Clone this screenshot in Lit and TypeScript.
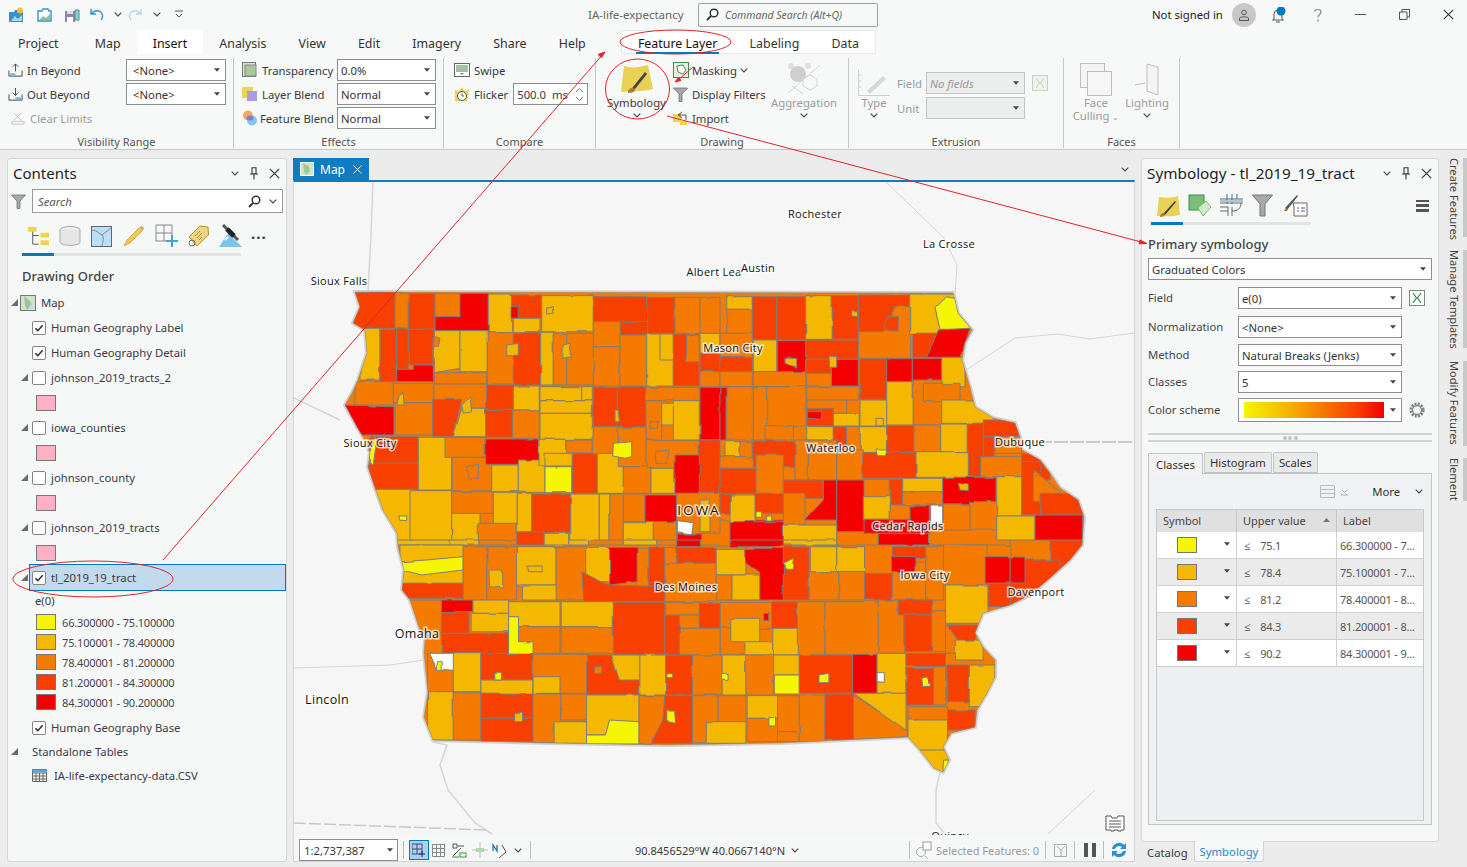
import { LitElement, html, css, svg } from "lit";
import { customElement } from "lit/decorators.js";

const COL: Record<string, string> = { y: "#f6f600", a: "#f5b800", o: "#f57b00", d: "#f74000", r: "#f50000", w: "#ffffff" };

const GROUPS = [
  { ox: 0, oy: 0, sx: 1, sy: 1, d: `o 1010 535 1050 560;d 1050 535 1084 585;d 1010 560 1060 612;r 1010 557 1025 583;o 930 720 960 735` },
  { ox: 390, oy: 520, sx: 2.529, sy: 3, d: `
a 15 0 150 75;a 150 0 225 75;o 225 10 320 75;d 320 35 390 75;a 390 40 455 75;a 455 0 500 75;o 500 0 590 75;a 590 10 675 75;o 675 10 725 75;r 725 40 785 80;o 785 0 860 75;r 860 0 995 80;a 995 20 1130 75;o 1130 0 1235 75;r 1235 0 1365 75;o 1365 10 1568 75;
a 25 75 185 190;y 30 125 90 120 185 110 185 150 80 165 30 150;d 30 190 200 235;o 185 80 245 240;o 245 80 320 240;a 320 80 420 195;a 335 195 432 240;o 420 80 495 240;a 495 82 555 185;o 620 85 655 240;d 655 82 695 200;d 485 155 540 190 560 195 700 200 700 245 490 245;r 555 82 625 82 625 185 555 195;o 695 82 825 130;d 725 82 825 130;o 695 130 825 245;a 825 85 900 165;r 900 85 995 85 995 240 935 240 935 160 900 130;o 825 165 865 240;a 865 165 935 240;d 995 80 1060 240;o 1060 155 1135 240;a 1063 80 1130 155;a 1130 80 1200 155;o 1135 155 1200 240;d 1200 160 1270 240;o 1270 125 1355 240;d 1270 80 1400 115;r 1268 110 1330 155;o 1355 80 1400 240;o 1400 75 1510 195;r 1505 110 1568 190;a 1405 195 1510 310;d 1510 190 1568 260;
o 50 240 130 340;r 130 240 210 275;d 130 275 200 340;d 130 340 300 400;a 210 240 300 280;a 205 280 300 335;a 300 245 430 320;o 325 320 430 400;y 300 290 325 290 325 365 362 365 362 400 300 400;a 433 245 565 320;o 433 320 565 400;d 565 247 695 405;d 695 285 732 405;o 697 247 790 285;o 732 285 782 325;d 782 250 835 325;o 732 325 835 405;o 835 247 965 325;o 835 320 900 405;a 862 295 935 365;a 900 365 968 405;d 965 245 1055 325;a 968 325 1065 405;o 1030 245 1100 405;o 1100 245 1235 405;o 1235 240 1300 400;d 1285 240 1370 285;d 1300 285 1370 395;o 1370 275 1405 395;o 1405 315 1440 400;d 1410 315 1490 315 1480 360 1500 420 1470 420;a 1430 360 1500 420;
o 95 400 160 515;w 100 400 172 400 172 455 120 450;a 160 398 230 515;d 230 400 362 480;a 230 480 362 520;o 362 403 500 520;a 362 470 430 520;d 497 405 632 525;a 560 405 632 405 632 480 580 480;a 632 405 697 525;d 697 405 765 525;o 765 405 840 525;a 840 405 900 525;o 900 405 970 525;a 970 405 1035 465;y 972 465 1035 522;d 1035 405 1170 520;r 1170 403 1232 520;a 1232 400 1305 520;d 1305 400 1405 440;d 1305 445 1375 555;o 1375 440 1405 555;d 1408 435 1465 545;a 1465 435 1530 435 1530 560 1465 560;
a 95 515 160 660;o 160 518 230 660;d 230 520 362 595;d 230 595 362 665;o 362 522 432 668;o 432 522 497 600;a 415 605 497 670;a 497 525 630 645;y 497 645 545 645 555 600 630 605 630 672 497 672;o 630 527 695 670;d 660 670 690 600 695 527 765 527 765 670;o 765 527 830 668;o 830 527 900 605;a 800 605 900 670;a 903 527 980 595;o 903 595 980 665;o 980 527 1035 635;o 980 635 1035 665;o 1035 525 1100 665;d 1100 522 1172 660;o 1172 525 1308 630 1308 650 1172 658;a 1172 520 1305 520 1305 630;o 1310 560 1410 600;a 1310 600 1410 700;d 1410 570 1480 630;a 1340 690 1415 760;
a 348 138 385 138 385 155 350 155;a 250 150 285 150 285 205 252 200;y 995 130 1020 115 1018 148 1000 148;y 700 570 720 570 722 610 700 605;y 1085 465 1110 460 1110 488 1085 488;o 518 440 538 440 538 460 518 460;y 838 460 855 460 855 478 838 478;y 700 458 715 458 715 470 700 470;w 1232 458 1250 458 1250 487 1232 485;y 1345 475 1358 470 1368 498 1347 500;y 265 460 282 460 282 480 265 480;y 958 590 975 590 975 618 958 618;a 315 580 335 580 335 605 315 605;r 945 280 958 280 958 302 945 302;y 1400 720 1412 720 1412 750 1398 750;y 120 425 132 425 132 452 120 452` },
  { ox: 340, oy: 280, sx: 3, sy: 3, d: `
d 40 35 170 145;o 165 40 205 145;d 205 40 285 148;o 285 40 360 110;r 285 110 360 110 360 40 445 40 445 152 285 152;a 445 42 515 155;d 515 45 605 115;r 513 80 535 115;a 520 115 600 155;a 605 47 760 155;d 760 50 920 125;d 840 125 920 165;o 760 125 840 200;d 920 52 1005 160;o 1005 52 1080 160;o 1080 52 1140 160;
a 60 145 120 300;d 120 148 170 305;d 170 148 205 268;d 205 148 282 255;r 170 268 220 268 220 255 280 255 280 305 170 305;a 283 152 360 152 360 265 283 278;a 360 152 442 275;o 283 278 440 312;o 442 155 520 312;d 520 157 602 315;a 602 157 640 315;o 640 160 680 315;o 680 160 760 315;o 760 200 840 318;o 840 165 920 318;a 920 162 1000 318;a 960 162 1000 240;d 1000 162 1078 318;o 1040 165 1078 245;a 1080 160 1140 220;d 1080 220 1140 275;o 1080 275 1140 320;
o 45 305 160 375;r 15 375 162 380 162 465 60 465;o 160 310 280 368;o 165 368 278 465;o 282 312 440 385;d 278 358 365 358 340 470 278 470;a 365 385 437 385 437 470 340 470;d 440 315 530 388;d 437 388 517 472;a 520 318 598 390;o 518 390 598 475;a 600 320 725 362;a 600 362 757 400;a 600 400 757 478;a 725 320 757 362;d 760 320 832 440;d 832 320 918 440;o 918 322 1078 362;o 918 362 965 480;a 965 370 1035 435;a 1000 362 1078 480;r 1080 322 1140 480;
d 90 470 235 550;d 85 550 265 628;a 235 472 335 630;o 315 472 435 532;o 337 532 455 632;r 437 477 595 477 595 520 615 520 615 540 540 553 437 553;a 455 555 535 635;a 535 540 615 637;a 597 478 680 558;a 615 520 697 558;y 615 560 695 638;o 680 480 757 518;d 697 520 772 640;a 772 520 850 640;o 757 440 835 520;o 835 442 918 560;o 850 560 930 640;o 918 482 1078 565;a 930 565 1005 640;r 1005 525 1090 640;d 1078 480 1140 640;
a 105 628 220 780;a 210 632 335 780;a 335 680 420 780;o 335 635 460 700;a 460 637 532 740;o 415 730 530 780;a 532 640 575 755;d 575 642 692 758;a 692 642 778 780;a 778 642 810 780;o 810 642 850 780;o 850 642 915 725;r 915 645 1010 728;a 850 728 940 780;o 940 725 1010 780;o 1010 640 1140 760;
o 283 170 300 175 295 200 283 205;a 500 195 535 190 535 225 500 228;a 670 195 690 190 695 230 668 235;y 820 490 875 485 875 530 855 535 818 528;y 88 520 105 470 110 480 100 555 88 550;a 620 85 640 80 642 100 620 102;a 825 390 835 390 838 425 825 425;o 380 555 415 552 415 595 385 595;o 930 425 955 425 952 445 930 445;o 945 515 985 510 985 550 948 550;y 178 708 200 708 200 722 178 720;a 178 345 190 340 192 375 170 375;a 365 375 390 350 395 395 370 400;a 1080 660 1110 660 1110 755 1080 755;w 1012 722 1060 728 1055 762 1012 755;r 1012 762 1085 762 1085 780 1012 780` },
  { ox: 720, oy: 280, sx: 3, sy: 3, d: `
a 20 50 97 88;o 20 88 97 160;d 97 50 170 180;d 170 50 257 180;a 257 47 337 178;d 337 47 415 178;d 415 45 572 155;o 415 155 490 155 525 80 572 80 572 235 415 235;a 572 42 705 42 705 160 572 160;y 645 85 680 50 705 55 715 100 755 148 660 148;d 578 160 655 232;r 620 232 655 150 750 145 735 190 720 232;o 0 160 97 230;
a 100 180 170 275;r 172 182 257 280;d 257 180 415 238;d 257 238 337 280;r 337 238 415 318;o 260 280 337 318;o 100 275 257 320;d 0 230 97 275;o 0 275 97 320;d 418 236 500 358;r 500 236 577 318;r 577 235 665 235 665 312 577 312;a 665 232 735 320;
r 0 322 18 480;o 20 320 100 480;o 100 320 140 480;o 140 320 258 440;o 135 437 220 480;o 260 320 415 360;o 260 360 380 400;a 310 400 418 438;d 260 385 340 438;a 420 360 500 438;a 500 305 580 435;o 580 300 665 435;o 610 310 720 365;a 665 360 820 430;a 420 440 500 518;d 500 437 582 518;o 582 435 662 515;a 662 432 742 515;d 742 430 790 590;d 790 420 895 470;d 790 470 825 530;o 825 470 905 520;a 260 440 340 480;d 340 440 380 510;o 380 440 420 595;
o 60 485 100 600;a 15 485 60 530;d 100 483 225 560;o 225 480 265 600;o 265 480 350 600;o 0 530 100 565;d 0 565 110 640;o 108 525 190 640;o 350 510 430 600;d 428 518 588 595;a 588 515 745 592;o 782 530 905 590;d 905 520 990 600;
d 190 600 310 655;r 255 720 310 660 310 600 350 600 350 720;r 350 600 440 755;o 190 640 255 735;o 432 598 508 675;d 508 598 548 675;a 548 595 668 635;o 548 635 668 675;a 430 650 508 718;o 508 675 600 720;r 668 592 828 672;o 670 672 750 750;o 750 665 830 750;r 570 678 628 760;r 432 718 570 760;w 632 678 668 678 668 732 632 732;a 830 590 905 708;d 905 545 960 705;o 940 570 1025 640 1060 665 940 665;d 960 640 1090 705;a 830 708 945 780;r 945 705 1088 780;a 190 735 350 780;d 100 640 190 700;a 30 645 105 725;r 30 725 190 780;d 0 640 30 700;
a 195 235 230 235 230 262 195 250;a 330 228 350 230 350 262 332 262;a 395 95 413 95 413 110 395 108;r 262 395 305 395 305 418 262 415;a 468 415 490 415 490 437 468 437;y 468 510 500 510 497 527 472 527;a 715 610 745 615 745 632 720 630;y 108 695 125 695 125 712 108 712;y 140 705 155 705 155 720 140 720;d 500 110 535 110 535 150 490 150` },
];

const OUTLINE = "355,292 953,293 955,300 958,313 972,330 965,343 962,360 965,370 970,387 975,407 993,418 1015,423 1020,437 1022,450 1040,460 1050,473 1060,488 1078,500 1084,517 1082,545 1070,560 1050,578 1030,595 1010,605 983,613 975,633 983,647 995,660 995,677 987,693 977,710 975,727 951,733 943,747 949,760 943,772 934,768 920,750 908,737 780,743 667,745 550,743 433,740 424,717 428,692 424,653 425,640 420,630 410,600 402,590 404,570 398,547 397,533 383,510 375,488 368,467 370,453 363,437 357,427 345,405 352,393 358,380 367,353 365,330 353,323 360,307";

function cells() {
  const out: unknown[] = [];
  for (const g of GROUPS) {
    for (const raw of g.d.split(";")) {
      const t = raw.trim().split(/\s+/);
      if (t.length < 5) continue;
      const fill = COL[t[0]];
      const n = t.slice(1).map(Number);
      const pts: string[] = [];
      if (n.length === 4) {
        const [a, b, c, d] = n;
        for (const [x, y] of [[a, b], [c, b], [c, d], [a, d]]) pts.push(`${(g.ox + x / g.sx).toFixed(1)},${(g.oy + y / g.sy).toFixed(1)}`);
      } else {
        for (let i = 0; i < n.length; i += 2) pts.push(`${(g.ox + n[i] / g.sx).toFixed(1)},${(g.oy + n[i + 1] / g.sy).toFixed(1)}`);
      }
      out.push(svg`<polygon points=${pts.join(" ")} fill=${fill} stroke="#7d7d7d" stroke-width="1"/>`);
    }
  }
  return out;
}

const LABELS: [string, number, number][] = [
  ["Rochester", 815, 218], ["La Crosse", 949, 248], ["Albert Lea", 714, 276], ["Austin", 758, 272], ["Sioux Falls", 339, 285],
  ["Mason City", 733, 352], ["Sioux City", 370, 447], ["Waterloo", 831, 452], ["Dubuque", 1020, 446], ["Cedar Rapids", 908, 530],
  ["Iowa City", 925, 579], ["Des Moines", 686, 591], ["Davenport", 1036, 596], ["Quincy", 950, 840],
];

const ic = {
  caret: html`<svg class="caret" viewBox="0 0 7 4" width="6" height="4"><path d="M0 0h7L3.500 4z" fill="#444"/></svg>`,
  chev: html`<svg viewBox="0 0 8 5" width="8" height="5"><path d="M.7.7 4 4l3.300-3.300" fill="none" stroke="#444" stroke-width="1.100"/></svg>`,
  tri: html`<svg class="tri" viewBox="0 0 7 7" width="7" height="7"><path d="M7 0v7H0z" fill="#6b6b6b"/></svg>`,
  pin: html`<svg viewBox="0 0 10 13" width="10" height="13"><path d="M2.500.8h5M3 .8v6h4v-6M1 7h8M5 7v5.500" fill="none" stroke="#333" stroke-width="1.100"/></svg>`,
  x: html`<svg viewBox="0 0 11 11" width="11" height="11"><path d="M.8.8l9.400 9.400M10.200.8.8 10.200" stroke="#333" stroke-width="1.100"/></svg>`,
  check: html`<svg viewBox="0 0 13 13" width="12" height="12"><path d="M2.600 6.800 5.300 9.400 10.400 3.400" fill="none" stroke="#333" stroke-width="1.700"/></svg>`,
  funnel: html`<svg viewBox="0 0 15 15" width="15" height="15"><path d="M.5 1h14L9 7v7.500H6V7z" fill="#a9a9a9" stroke="#6e6e6e" stroke-width=".8"/></svg>`,
  lens: html`<svg viewBox="0 0 13 13" width="13" height="13"><circle cx="8" cy="5" r="3.800" fill="none" stroke="#333" stroke-width="1.400"/><path d="M5 8 1 12" stroke="#333" stroke-width="1.800"/></svg>`,
  brush: html`<svg viewBox="0 0 32 30" width="32" height="30"><path d="M3 2 C9 4 16 4 27 1 L32 25 C22 28 10 27 0 28z" fill="#e8d155"/><path d="M9 27 12 23 24 8 26 10 14 25z" fill="#444"/><path d="M7 29 c0-4 2-5 5-5 l2 1c0 3-3 4-7 4z" fill="#a87a3c"/></svg>`,
  ssel: html`<svg viewBox="0 0 24 24" width="24" height="24"><path d="M3 3C9 4 16 4 22 2L24 21C16 23 8 22 1 22z" fill="#e8d155"/><path d="M7 20 19 7l1 1L9 21z" fill="#444"/><path d="M4 23c0-3 2-4 4-4l1 1c0 2-2 3-5 3z" fill="#a87a3c"/></svg>`,
  excel: html`<svg viewBox="0 0 16 16" width="16" height="16"><rect x=".5" y=".5" width="15" height="15" fill="#fff" stroke="#7a8a7d"/><path d="M4 3l3.500 5L4 13M12 3 8.500 8 12 13" fill="none" stroke="#3e8e4d" stroke-width="1.300"/></svg>`,
  gear: html`<svg viewBox="0 0 16 16" width="16" height="16"><circle cx="8" cy="8" r="6.300" fill="none" stroke="#808080" stroke-width="2.600" stroke-dasharray="2 1.300"/><circle cx="8" cy="8" r="4.500" fill="none" stroke="#808080" stroke-width="1.300"/></svg>`,
};

@customElement("app-root")
export class AppRoot extends LitElement {
  static styles = css`
    :host { display: block; width: 1467px; height: 867px; position: relative; overflow: hidden; background: #ececec; font: 11.3px "Noto Sans", "Open Sans", sans-serif; color: #3a3a3a; }
    svg { display: block; flex: none; }
    .title { height: 30px; box-sizing: border-box; padding-bottom: 1px; background: #f7f8f8; display: flex; align-items: center; }
    .qat { width: 588px; padding-left: 8px; box-sizing: border-box; display: grid; grid-template-columns: 28px 28px 26px 24px 13px 26px 22px 16px; align-items: center; }
    .apptitle { width: 110px; color: #666; font-size: 11.500px; }
    .cmd { width: 180px; height: 24px; box-sizing: border-box; border: 1px solid #a0a0a0; border-radius: 2px; display: flex; align-items: center; gap: 6px; padding-left: 7px; color: #666; font-style: italic; font-size: 10.500px; }
    .acct { margin-left: auto; display: grid; grid-template-columns: 80px 38px 43px 42px 44px 44px 24px; align-items: center; justify-items: start; color: #222; }
    .avatar { width: 24px; height: 24px; border-radius: 50%; background: #c8c8c8; display: flex; align-items: center; justify-content: center; }
    .tabs { height: 26px; background: #f7f8f8; display: flex; padding-left: 2px; font-size: 12.400px; }
    .tab { padding: 0 16.100px; height: 24px; line-height: 27px; color: #333; white-space: nowrap; }
    .tab.m2 { margin-left: 4px; }
    .tab.on { background: #fff; color: #111; }
    .ctx { margin-left: 19px; display: flex; background: #fff; height: 24px; border: 1px solid #e8e8e8; border-radius: 2px; box-sizing: border-box; }
    .ctx .tab { height: 23px; line-height: 26px; }
    .ctx .act { position: relative; color: #111; }
    .ctx .act::after { content: ""; position: absolute; left: 14px; right: 14px; bottom: 0; height: 2px; background: #0079c1; }
    .ribbon { height: 94px; box-sizing: border-box; background: #f7f8f8; border-bottom: 1px solid #c8c8c8; display: flex; }
    .grp { margin-top: 2px; height: 90px; box-sizing: border-box; border-right: 1px solid #c6c6c6; display: flex; flex-direction: column; flex: none; }
    .gc { flex: 1; display: flex; min-height: 0; }
    .gl { height: 15px; line-height: 17px; text-align: center; font-size: 11px; color: #555; }
    .col { display: flex; flex-direction: column; }
    .r { height: 24px; display: flex; align-items: center; white-space: nowrap; }
    .r .t { margin-left: 4px; }
    .dis { color: #9b9b9b; }
    .sel { height: 22px; box-sizing: border-box; background: #fff; border: 1px solid #8e8e8e; display: flex; align-items: center; justify-content: space-between; padding: 0 5px 0 3px; white-space: nowrap; overflow: hidden; flex: none; color: #333; }
    .sel.gr { background: #eceded; border-color: #c4c4c4; color: #999; font-style: italic; }
    .w100 { width: 100px; } .w99 { width: 99px; } .indent { padding-left: 6px; }
    .l1 { width: 118px; } .l2 { width: 95px; }
    .spin { margin-left: 5px; width: 75px; height: 22px; box-sizing: border-box; border: 1px solid #8e8e8e; background: #fff; display: flex; align-items: center; justify-content: space-between; padding: 0 3px; }
    .big { display: flex; flex-direction: column; align-items: center; flex: none; }
    .big .ico { display: flex; align-items: flex-end; justify-content: center; }
    .big .bl { line-height: 13px; text-align: center; white-space: nowrap; }
    .big .cv { margin-top: 4px; }
    .h36 { height: 36px; } .h38 { height: 38px; }
    .mt2 { margin-top: 2px; }
    .main { height: 717px; display: flex; padding: 8px 0 0 7px; box-sizing: border-box; gap: 6px; }
    .panel { background: #f6f8f8; border: 1px solid #d4d6d6; border-radius: 3px; box-sizing: border-box; }
    .left { width: 280px; height: 704px; display: flex; flex-direction: column; padding: 0 0 0 5px; }
    .ph { height: 30px; padding-bottom: 2px; box-sizing: border-box; display: flex; align-items: center; font-size: 15px; color: #1e1e1e; flex: none; }
    .ph .pt { flex: 1; white-space: nowrap; }
    .ph .pt.wider { font-size: 15.300px; }
    .ph .pb { display: flex; align-items: center; gap: 10px; margin-right: 6px; }
    .srow { display: flex; align-items: center; gap: 6px; height: 24px; flex: none; margin-left: -2px; }
    .search { width: 251px; height: 24px; box-sizing: border-box; border: 1px solid #9a9a9a; background: #fff; display: flex; align-items: center; padding: 0 5px; gap: 8px; font-style: italic; color: #555; }
    .search span { flex: 1; }
    .icons { display: grid; grid-template-columns: repeat(8, 32px); align-items: center; box-sizing: border-box; height: 40px; padding: 6px 0 0 14px; flex: none; }
    .dots { font-weight: 700; font-size: 15px; letter-spacing: 1px; line-height: 8px; padding-bottom: 6px; }
    .bar { height: 3px; background: #e2e4e4; display: flex; flex: none; }
    .bar i { width: 32px; background: #0079c1; display: block; }
    .lbar { width: 219px; margin-left: 9px; }
    .ltitle { margin: 11px 0 0 9px; height: 18px; line-height: 18px; font-size: 13px; font-weight: 500; color: #444; flex: none; }
    .tree { margin-top: 5px; flex: none; margin-left: -5px; }
    .row { height: 25px; display: flex; align-items: center; white-space: nowrap; color: #3a3a48; }
    .row .tri { margin-left: 13px; margin-right: 4px; }
    .row.top .tri { margin-left: 3px; margin-right: 2px; }
    .mapic { margin-right: 5px; }
    .stitle { margin-left: 12px; }
    .cb { width: 12px; height: 12px; border: 1px solid #858585; border-radius: 2px; background: #fff; margin-right: 5px; flex: none; }
    .nt { margin-left: 24px; }
    .selrow { margin: 0 1px 0 22px; background: #c3d9ec; outline: 1px solid #0079c1; }
    .selrow .tri { position: absolute; margin: 0; left: 21px; }
    .selrow .cb { margin-left: 2px; }
    .swatch { width: 20px; height: 16px; border: 1px solid #777; box-sizing: border-box; margin-left: 28px; flex: none; }
    .lg { height: 20px; display: flex; align-items: center; gap: 6px; color: #45454f; font-size: 11px; letter-spacing: -.16px; }
    .field { height: 22px; line-height: 22px; padding-left: 27px; }
    .gap4 { height: 3px; }
    .h23 { height: 23px; }
    .csv { padding-left: 24px; gap: 7px; }
    .map { width: 842px; height: 704px; display: flex; flex-direction: column; }
    .mtabs { height: 22px; display: flex; justify-content: space-between; align-items: center; padding-right: 6px; flex: none; }
    .mtab { width: 76px; height: 22px; background: #0f7cc1; color: #fff; display: flex; align-items: center; gap: 6px; padding-left: 7px; box-sizing: border-box; font-size: 12px; }
    .mtab .xx { margin-left: 2px; }
    .mapbox { flex: none; height: 655px; border-top: 2px solid #0f7cc1; border-left: 1px solid #d4d4d4; border-right: 1px solid #d4d4d4; box-sizing: border-box; background: #f6f6f6; overflow: hidden; position: relative; }
    .mapbox text { font-family: "Open Sans", "Noto Sans", sans-serif; font-size: 11px; font-weight: 500; letter-spacing: .3px; fill: #111; text-anchor: middle; paint-order: stroke; stroke: #fff; stroke-width: 3px; stroke-opacity: .72; }
    .mapbox text.big2 { font-size: 13.500px; letter-spacing: 2px; }
    .mapbox text.big3 { font-size: 12.500px; }
    .status { height: 27px; padding-top: 4px; background: #f6f7f7; border: 1px solid #d4d4d4; border-top: 0; box-sizing: border-box; display: flex; align-items: center; padding-left: 5px; flex: none; }
    .sc { width: 99px; height: 22px; background: #fff; border: 1px solid #8e8e8e; box-sizing: border-box; display: flex; align-items: center; justify-content: space-between; padding: 0 4px; }
    .sep { width: 1px; height: 18px; background: #bdbdbd; flex: none; }
    .s1 { margin: 0 5px; } .s2 { margin-left: 8px; } .s3 { margin-left: 110px; } .s4 { margin-left: 6px; } .s5 { margin-left: 7px; }
    .hl { background: #a9d1ee; border: 1px solid #0079c1; width: 20px; height: 20px; box-sizing: border-box; display: flex; align-items: center; justify-content: center; margin: 0 3px 0 0; }
    .ml3 { margin-left: 3px; } .ml4 { margin-left: 4px; } .ml5 { margin-left: 5px; } .ml6 { margin-left: 6px; } .ml7 { margin-left: 7px; } .ml8 { margin-left: 8px; } .ml9 { margin-left: 9px; }
    .coord { width: 147px; margin: 0 9px 0 104px; white-space: nowrap; font-size: 11px; }
    .sf { margin-left: 3px; white-space: nowrap; font-size: 11px; }
    .right { width: 298px; height: 684px; padding: 0 0 0 5px; display: flex; flex-direction: column; position: relative; }
    .rt { display: grid; grid-template-columns: repeat(5, 32px) 1fr; align-items: center; height: 33px; padding-left: 9px; flex: none; }
    .ham { justify-self: end; margin-right: 9px; width: 13px; height: 12px; display: flex; flex-direction: column; justify-content: space-between; }
    .ham i { display: block; height: 2.500px; background: #555; }
    .rbar { width: 160px; margin-left: 4px; }
    .ps { margin: 10px 0 5px 1px; height: 18px; line-height: 18px; font-size: 13px; font-weight: 500; color: #444; flex: none; }
    .wide { width: 284px; margin-left: 1px; height: 22px; flex: none; }
    .frow { display: flex; align-items: center; flex: none; margin-left: 1px; margin-top: 7px; }
    .frow.m6 { margin-top: 6px; } .frow.m5 { margin-top: 5px; }
    .frow .fl { width: 90px; color: #444; padding-bottom: 2px; }
    .frow .sel { width: 164px; }
    .frow .sel.tall { height: 24px; }
    .frow .aft { margin-left: 7px; }
    .grad { flex: 1; height: 16px; margin-right: 6px; margin-left: 2px; background: linear-gradient(90deg, #f6f600, #f5b800 30%, #f57b00 55%, #f74000 80%, #f50000); }
    .split { margin: 11px 0 0 1px; width: 284px; height: 9px; border-top: 2px solid #d2d2d2; border-bottom: 2px solid #d2d2d2; box-sizing: border-box; display: flex; justify-content: center; align-items: center; gap: 1.500px; flex: none; }
    .split i { width: 4px; height: 4px; border-radius: 50%; background: #c4c4c4; display: block; }
    .ct { display: flex; margin: 10px 0 0 1px; height: 21px; align-items: flex-end; flex: none; }
    .ct div { height: 19px; line-height: 20px; padding: 0 5px; background: #e9eaea; border: 1px solid #c4c4c4; border-bottom: 1px solid #c4c4c4; margin-right: 1px; border-radius: 2px 2px 0 0; color: #333; box-sizing: content-box; }
    .ct .on { height: 21px; width: 55px; box-sizing: border-box; text-align: center; padding: 0; line-height: 21px; background: #f2f3f3; border-bottom: 0; margin-bottom: -1px; position: relative; }
    .cbody { width: 284px; height: 352px; margin-left: 1px; box-sizing: border-box; background: #f0f1f2; border: 1px solid #c4c4c4; padding: 0 7px; flex: none; }
    .ctools { height: 35px; display: flex; align-items: center; justify-content: flex-end; gap: 6px; padding-right: 1px; color: #333; }
    .ctools .m { margin-left: 18px; }
    .tbl { height: 312px; border: 1px solid #c8c8c8; background: #eeeff1; box-sizing: border-box; display: grid; grid-template-columns: 80px 100px 1fr; grid-template-rows: 22px repeat(5, 27px); }
    .th { background: #e0e0e0; border-right: 1px solid #c8c8c8; display: flex; align-items: center; justify-content: space-between; padding: 0 6px 2px; color: #444; font-size: 11px; }
    .th.last { border-right: 0; }
    .td { background: #fff; border-right: 1px solid #d0d0d0; border-bottom: 1px solid #d0d0d0; display: flex; align-items: center; padding: 0 3px; box-sizing: border-box; white-space: nowrap; color: #555; overflow: hidden; font-size: 11px; letter-spacing: -.18px; }
    .td.last { border-right: 0; }
    .td.alt { background: #ebebeb; }
    .td.sym { position: relative; padding-left: 20px; }
    .td.sym .caret { position: absolute; right: 6px; top: 10px; }
    .td .sw { width: 20px; height: 16px; border: 1px solid #777; box-sizing: border-box; }
    .td.up { padding-left: 7px; gap: 10px; }
    .hrow { display: contents; }
    .btabs { position: absolute; left: 0; top: 683px; display: flex; height: 21px; align-items: flex-start; }
    .btabs span { padding: 0 5px; line-height: 21px; height: 20px; box-sizing: border-box; }
    .btabs .on { background: #f7f9f9; color: #1e88d8; margin-left: 1px; border: 1px solid #d4d6d6; border-top: 0; border-radius: 0 0 3px 3px; margin-top: -1px; height: 21px; line-height: 22px; }
    .vt { width: 28px; margin-left: -6px; flex: none; }
    .vt div { writing-mode: vertical-rl; width: 28px; border-right: 4px solid #c9c9c9; box-sizing: border-box; padding: 0 1px 0 0; color: #444; white-space: nowrap; font-size: 11.100px; }
    .vt .a { height: 79px; margin-bottom: 13px; }
    .vt .b { height: 98px; margin-bottom: 13px; }
    .vt .c { height: 85px; margin-bottom: 12px; }
    .vt .d { height: 43px; }
    .ann { position: absolute; left: 0; top: 0; pointer-events: none; }
  `;

  sel(t: string, cls = "w100") {
    return html`<div class="sel ${cls}"><span>${t}</span>${ic.caret}</div>`;
  }
  row(kind: "cb" | "nc", text: string, opts: { tri?: boolean } = {}) {
    return html`<div class="row">
      ${opts.tri ? ic.tri : html`<span class="nt"></span>`}
      <span class="cb">${kind === "cb" ? ic.check : ""}</span><span>${text}</span></div>`;
  }
  swatch(c: string) {
    return html`<div class="row"><span class="swatch" style="background:${c}"></span></div>`;
  }

  renderTitle() {
    return html`<div class="title">
      <div class="qat">
        <svg viewBox="0 0 16 16" width="16" height="16"><path d="M1 5h5l1-2h8v12H1z" fill="#3d8fc9"/><path d="M3 14l4-5 3 3 4-4v6z" fill="#a9d6ee"/><circle cx="12" cy="3.500" r="3" fill="#f2c22e"/></svg>
        <svg viewBox="0 0 16 16" width="16" height="16"><path d="M2 4h4l1-2h5l1 2h2v10H2z" fill="#fff" stroke="#3d8fc9" stroke-width="1.400"/><path d="M3 13l4-4 3 2 4-4v6z" fill="#8cc08e"/></svg>
        <svg viewBox="0 0 16 16" width="16" height="16"><rect x="1" y="4" width="10" height="11" fill="#8e84b8"/><rect x="3" y="10" width="6" height="5" fill="#fff"/><rect x="3" y="4" width="6" height="3" fill="#ddd"/><path d="M11 3h4v10h-4z" fill="#9dd0a0" stroke="#3d8fc9"/></svg>
        <svg viewBox="0 0 15 14" width="15" height="14"><path d="M1 1v5h5M1.500 6C3 3 7 2 10 3.500c3 2 3.500 5.500 1 8.500" fill="none" stroke="#3d8fc9" stroke-width="1.500"/></svg>
        ${ic.chev}
        <svg viewBox="0 0 15 14" width="15" height="14"><path d="M14 1v5H9M13.500 6C12 3 8 2 5 3.500c-3 2-3.500 5.500-1 8.500" fill="none" stroke="#b9d7ea" stroke-width="1.500"/></svg>
        ${ic.chev}
        <svg viewBox="0 0 8 9" width="8" height="9"><path d="M0 1h8M1 4l3 3 3-3" fill="none" stroke="#555" stroke-width="1"/></svg>
      </div>
      <div class="apptitle">IA-life-expectancy</div>
      <div class="cmd">${ic.lens}<span>Command Search (Alt+Q)</span></div>
      <div class="acct">
        <span>Not signed in</span>
        <span class="avatar"><svg viewBox="0 0 12 12" width="12" height="12"><circle cx="6" cy="3.500" r="2.300" fill="none" stroke="#555"/><path d="M1.500 11.500V9c1-1.500 8-1.500 9 0v2.500z" fill="none" stroke="#555"/></svg></span>
        <svg viewBox="0 0 16 16" width="16" height="16"><path d="M4 12V7a4 4 0 0 1 8 0v5l1.500 1h-11zM6 15h4" fill="none" stroke="#555"/><circle cx="11" cy="4" r="4.500" fill="#0079c1"/></svg>
        <svg viewBox="0 0 10 14" width="10" height="14"><path d="M1.500 3.500C2 1 8 .5 8 4c0 2.500-3 2.500-3 5.500" fill="none" stroke="#888" stroke-width="1.200"/><circle cx="5" cy="12.500" r=".9" fill="#888"/></svg>
        <svg viewBox="0 0 11 1" width="11" height="1"><path d="M0 .5h11" stroke="#555"/></svg>
        <svg viewBox="0 0 11 11" width="11" height="11"><path d="M.5 3h7.500v7.500H.5zM3 3V.5h7.500V8H8" fill="none" stroke="#555"/></svg>
        ${ic.x}
      </div>
    </div>`;
  }

  renderTabs() {
    return html`<div class="tabs">
      <div class="tab">Project</div><div class="tab m2">Map</div>
      <div class="tab on">Insert</div>
      ${["Analysis", "View", "Edit", "Imagery", "Share", "Help"].map((t) => html`<div class="tab">${t}</div>`)}
      <div class="ctx"><div class="tab act">Feature Layer</div><div class="tab">Labeling</div><div class="tab">Data</div></div>
    </div>`;
  }

  renderRibbon() {
    const gray = "#bdbdbd";
    return html`<div class="ribbon">
      <div class="grp" style="width:234px"><div class="gc"><div class="col" style="padding-left:8px">
        <div class="r"><div class="r l1"><svg viewBox="0 0 16 16" width="15" height="15"><path d="M8 9V1M5 4l3-3 3 3M1 8v6h14V8" fill="none" stroke="#444"/><path d="M2 11h6v3H2z" fill="#7fb3dd"/></svg><span class="t">In Beyond</span></div>${this.sel("<None>", "w100 indent")}</div>
        <div class="r"><div class="r l1"><svg viewBox="0 0 16 16" width="15" height="15"><path d="M8 1v8M5 6l3 3 3-3M1 8v6h14V8" fill="none" stroke="#444"/><path d="M8 11h6v3H8z" fill="#7fb3dd"/></svg><span class="t">Out Beyond</span></div>${this.sel("<None>", "w100 indent")}</div>
        <div class="r dis" style="padding-left:3px"><svg viewBox="0 0 16 16" width="15" height="15"><path d="M3 2l8 8M11 2l-8 8M1 11h13v3H1z" fill="none" stroke="#c4c4c4"/></svg><span class="t">Clear Limits</span></div>
      </div></div><div class="gl">Visibility Range</div></div>

      <div class="grp" style="width:210px"><div class="gc"><div class="col" style="padding-left:8px">
        <div class="r"><div class="r l2"><svg viewBox="0 0 16 16" width="16" height="16"><rect x=".5" y=".5" width="13" height="14" fill="#ddd" stroke="#777"/><rect x="3" y="3" width="11" height="11" fill="#a8c79a" stroke="#888"/></svg><span class="t">Transparency</span></div>${this.sel("0.0%", "w99")}</div>
        <div class="r"><div class="r l2"><svg viewBox="0 0 16 16" width="16" height="16"><path d="M0 1h11v11H0z" fill="#ecd54f"/><path d="M5 5h10v10H5z" fill="#a99be0"/></svg><span class="t">Layer Blend</span></div>${this.sel("Normal", "w99")}</div>
        <div class="r"><div class="r l2"><svg viewBox="0 0 16 16" width="16" height="16"><circle cx="6" cy="5.500" r="5" fill="#f0a866"/><circle cx="10" cy="10.500" r="5" fill="#7ec9ee"/><ellipse cx="8" cy="8" rx="3.500" ry="2.500" fill="#8f78c9"/></svg><span class="t" style="margin-left:2px">Feature Blend</span></div>${this.sel("Normal", "w99")}</div>
      </div></div><div class="gl">Effects</div></div>

      <div class="grp" style="width:152px"><div class="gc"><div class="col" style="padding-left:10px">
        <div class="r"><svg viewBox="0 0 16 16" width="16" height="16"><rect x=".5" y="1.500" width="15" height="13" fill="#fff" stroke="#666"/><rect x="2" y="3" width="12" height="5" fill="#9fc6a1"/><path d="M2 9h12" stroke="#666"/><path d="M6 11h4l-2 2z" fill="#5a87b8"/></svg><span class="t">Swipe</span></div>
        <div class="r"><svg viewBox="0 0 16 16" width="16" height="16"><path d="M1 4 5 5 8 1l2 4 5-1-2 11H1z" fill="#ecd54f"/><circle cx="8" cy="10" r="4.500" fill="#fff" stroke="#555"/><path d="M8 7.500V10h2" fill="none" stroke="#555"/></svg><span class="t">Flicker</span>
          <div class="spin"><span>500.0&nbsp; ms</span><svg viewBox="0 0 9 15" width="9" height="15"><path d="M1 5l3.500-3.500L8 5M1 10l3.500 3.500L8 10" fill="none" stroke="#777"/></svg></div></div>
      </div></div><div class="gl">Compare</div></div>

      <div class="grp" style="width:253px"><div class="gc" style="padding-left:9px">
        <div class="big" style="width:63px"><div class="ico h36">${ic.brush}</div><div class="bl mt2">Symbology</div><div class="cv">${ic.chev}</div></div>
        <div class="col" style="width:98px;margin-left:5px">
          <div class="r"><svg viewBox="0 0 16 16" width="16" height="16"><rect x=".5" y=".5" width="15" height="15" fill="#e6f0e2" stroke="#3e8e4d"/><path d="M4 4l6-1 3 5-3 4-5-2z" fill="#fff" stroke="#3e8e4d"/></svg><span class="t" style="margin-left:3px">Masking</span>&nbsp;${ic.chev}</div>
          <div class="r"><svg viewBox="0 0 15 15" width="15" height="15"><path d="M.5 1h14L9 7v7.500H6V7z" fill="#a9a9a9" stroke="#6e6e6e" stroke-width=".8"/></svg><span class="t">Display Filters</span></div>
          <div class="r"><svg viewBox="0 0 16 16" width="16" height="16"><path d="M0 4h8v8H0z" fill="#ecd54f"/><path d="M9 2 5 5l4 3M5 5h8v5" fill="none" stroke="#555"/><path d="M7 11h7v4H7z" fill="#ecd54f"/></svg><span class="t" style="margin-left:3px">Import</span></div>
        </div>
        <div class="big dis" style="width:66px"><div class="ico h36"><svg viewBox="0 0 32 31" width="32" height="31"><circle cx="10" cy="11" r="8" fill="#cfcfcf"/><circle cx="3" cy="3" r="3" fill="#e0e0e0"/><circle cx="20" cy="3" r="3" fill="#e0e0e0"/><path d="M22 12l7 4v7l-7 4-7-4v-7zM0 30 32 2M4 23l11 8" fill="none" stroke="#d4d4d4"/></svg></div><div class="bl mt2">Aggregation</div><div class="cv">${ic.chev}</div></div>
      </div><div class="gl">Drawing</div></div>

      <div class="grp" style="width:215px"><div class="gc" style="padding-left:9px">
        <div class="big dis" style="width:32px"><div class="ico h38"><svg viewBox="0 0 32 26" width="32" height="26"><path d="M.5 0v25.500H32M.5 5h3M.5 11h3M.5 17h3" fill="none" stroke="#cfcfcf"/><path d="M9 21 25 6l3 3-16 15z" fill="#d8d8d8"/></svg></div><div class="bl">Type</div><div class="cv">${ic.chev}</div></div>
        <div class="col dis" style="margin-left:7px;padding-top:14px;gap:3px">
          <div class="r" style="height:22px"><span style="width:29px">Field</span>${this.sel("No fields", "w99 gr")}<span style="margin-left:7px;display:flex"><svg viewBox="0 0 16 16" width="16" height="16"><rect x=".5" y=".5" width="15" height="15" fill="#eef3ee" stroke="#c6cfc8"/><path d="M4 3l3.500 5L4 13M12 3 8.500 8 12 13" fill="none" stroke="#b6d4bd"/></svg></span></div>
          <div class="r" style="height:22px"><span style="width:29px">Unit</span>${this.sel("", "w99 gr")}</div>
        </div>
      </div><div class="gl">Extrusion</div></div>

      <div class="grp" style="width:116px"><div class="gc" style="padding-left:4px">
        <div class="big dis" style="width:56px"><div class="ico h38"><svg viewBox="0 0 32 33" width="32" height="33"><rect x=".5" y=".5" width="24" height="24" fill="#f4f4f4" stroke="${gray}"/><rect x="7.500" y="8.500" width="24" height="24" fill="#f6f6f6" stroke="${gray}"/></svg></div><div class="bl">Face<br />Culling <span style="font-size:8px">⌄</span></div></div>
        <div class="big dis" style="width:46px"><div class="ico h38"><svg viewBox="0 0 24 33" width="24" height="33"><path d="M12 1 23 4v28l-11-4zM0 22l10-2" fill="#f4f4f4" stroke="${gray}"/></svg></div><div class="bl">Lighting</div><div class="cv">${ic.chev}</div></div>
      </div><div class="gl">Faces</div></div>
    </div>`;
  }

  renderContents() {
    const pink = "#ffb0c4";
    const lg: [string, string][] = [["#f6f600", "66.300000 - 75.100000"], ["#f5b800", "75.100001 - 78.400000"], ["#f57b00", "78.400001 - 81.200000"], ["#f74000", "81.200001 - 84.300000"], ["#f50000", "84.300001 - 90.200000"]];
    return html`<div class="panel left">
      <div class="ph"><span class="pt">Contents</span><span class="pb">${ic.chev}${ic.pin}${ic.x}</span></div>
      <div class="srow">${ic.funnel}<div class="search"><span>Search</span>${ic.lens}${ic.chev}</div></div>
      <div class="icons">
        <svg viewBox="0 0 24 24" width="23" height="23"><path d="M6 6v14h6M6 11h6" fill="none" stroke="#555"/><path d="M1 2h9v5H1zM14 8h9v5h-9zM14 16h9v5h-9z" fill="#ecd54f"/></svg>
        <svg viewBox="0 0 22 22" width="22" height="22"><ellipse cx="11" cy="5" rx="10" ry="3.500" fill="#eee" stroke="#aaa"/><path d="M1 5v12c0 4.500 20 4.500 20 0V5" fill="#e6e6e6" stroke="#aaa"/></svg>
        <svg viewBox="0 0 21 21" width="21" height="21"><rect x=".5" y=".5" width="20" height="20" fill="#b9e0f4" stroke="#666"/><path d="M1 4c5 0 7 4 10 5l9-7M11 9c3 4 0 8 0 11" fill="none" stroke="#888"/></svg>
        <svg viewBox="0 0 22 22" width="22" height="22"><path d="M1 21l3-6L17 2l3 3L7 18z" fill="#f2c84b" stroke="#b98f20" stroke-width=".6"/><path d="M17 2l3 3 1-2-2-2z" fill="#e59a8f"/></svg>
        <svg viewBox="0 0 24 24" width="24" height="24"><path d="M1 1h16v16H1zM9 1v16M1 9h16" fill="none" stroke="#888"/><path d="M17 11v12M11 17h12" stroke="#4a9fd6" stroke-width="2"/></svg>
        <svg viewBox="0 0 22 22" width="22" height="22"><path d="M2 12 13 1l8 1 .500 8L10 21z" fill="#f0d488" stroke="#b98f20"/><path d="M8 11l5-5M10 13l5-5M12 15l3-3" stroke="#b98f20"/><circle cx="5" cy="18" r="3" fill="none" stroke="#666"/></svg>
        <svg viewBox="0 0 24 24" width="24" height="24"><path d="M0 23 9 9l14 14z" fill="#7fc4e6"/><path d="M4 1l5 5M14 11l5 5" stroke="#555" stroke-width="3"/><path d="M8 5l7 7" stroke="#222" stroke-width="5"/><path d="M6 16l3-3" stroke="#fff" stroke-width="2"/></svg>
        <span class="dots">...</span>
      </div>
      <div class="bar lbar"><i></i></div>
      <div class="ltitle">Drawing Order</div>
      <div class="tree">
        <div class="row top">${ic.tri}<svg class="mapic" viewBox="0 0 16 16" width="16" height="16"><rect x=".5" y=".5" width="15" height="15" fill="#cfe3cd" stroke="#777"/><path d="M4 1l6 5 2 4-5 5-2-5z" fill="#9fc596"/><path d="M11 9l3 5H8z" fill="#b9dff2"/></svg><span>Map</span></div>
        ${this.row("cb", "Human Geography Label")}
        ${this.row("cb", "Human Geography Detail")}
        ${this.row("nc", "johnson_2019_tracts_2", { tri: true })}
        ${this.swatch(pink)}
        ${this.row("nc", "iowa_counties", { tri: true })}
        ${this.swatch(pink)}
        ${this.row("nc", "johnson_county", { tri: true })}
        ${this.swatch(pink)}
        ${this.row("nc", "johnson_2019_tracts", { tri: true })}
        ${this.swatch(pink)}
        <div class="row selrow">${ic.tri}<span class="cb">${ic.check}</span><span>tl_2019_19_tract</span></div>
        <div class="field">e(0)</div>
        ${lg.map(([c, t]) => html`<div class="lg"><span class="swatch" style="background:${c}"></span><span>${t}</span></div>`)}
        <div class="gap4"></div>
        ${this.row("cb", "Human Geography Base")}
        <div class="row top h23">${ic.tri}<span class="stitle">Standalone Tables</span></div>
        <div class="row csv"><svg viewBox="0 0 15 13" width="15" height="13"><path d="M.5.5h14v12H.500zM.5 4h14M.5 7h14M.5 10h14M4 4v9M7.500 4v9M11 4v9" fill="none" stroke="#666"/><rect x=".5" y=".5" width="14" height="3" fill="#5aa5d8"/></svg><span>IA-life-expectancy-data.CSV</span></div>
      </div>
    </div>`;
  }

  renderMap() {
    const c1 = "#d6d6d6";
    return html`<div class="map">
      <div class="mtabs">
        <div class="mtab"><svg viewBox="0 0 14 14" width="14" height="14"><rect x=".5" y=".5" width="13" height="13" fill="#cfe3cd" stroke="#fff"/><path d="M3 1l6 4 1 4-4 4-2-4z" fill="#9fc596"/></svg><span>Map</span><svg class="xx" viewBox="0 0 9 9" width="9" height="9"><path d="M.5.5l8 8M8.500.5l-8 8" stroke="#fff"/></svg></div>
        ${ic.chev}
      </div>
      <div class="mapbox">
        <svg viewBox="294 182 840 653" width="840" height="653">
          <defs>
            <clipPath id="ia"><polygon points=${OUTLINE} /></clipPath>
            <filter id="rough" x="0" y="0" width="100%" height="100%" color-interpolation-filters="sRGB"><feTurbulence type="fractalNoise" baseFrequency=".05" numOctaves="1" seed="4" result="n"/><feDisplacementMap in="SourceGraphic" in2="n" scale="3" xChannelSelector="R" yChannelSelector="G"/><feGaussianBlur stdDeviation=".35"/></filter>
          </defs>
          <g fill="none" stroke=${c1} stroke-width="1.500">
            <path d="M373 181 371 235 368 292" />
            <path d="M294 398 340 420" />
            <path d="M955 295 957 265 944 238 885 181" stroke-width="1"/>
            <path d="M966 370 1015 338 1058 334 1090 339 1134 333" stroke-width="1"/>
            <path d="M1022 442H1134" stroke="#bbb" stroke-width="1.500" stroke-dasharray="14 2"/>
            <path d="M433 742 447 745 440 765 448 790 475 823 492 834" />
            <path d="M294 823 487 830" stroke-dasharray="12 3" stroke="#c9c9c9"/>
            <path d="M940 772 936 790 936 823 945 834" />
            <path d="M1095 790 1048 834" stroke-width="1"/>
            <path d="M294 668 390 665 424 660" stroke-width="1"/>
          </g>
          <polygon points=${OUTLINE} fill="none" stroke="#d2d2d2" stroke-width="4" />
          <g clip-path="url(#ia)"><rect x="340" y="285" width="760" height="490" fill="#f57b00"/><g filter="url(#rough)">${cells()}</g></g>
          <polygon points=${OUTLINE} fill="none" stroke="#8a8a8a" stroke-width=".5" />
          ${LABELS.map(([t, x, y]) => svg`<text x=${x} y=${y}>${t}</text>`)}
          <text class="big2" x="699" y="515">IOWA</text>
          <text class="big3" x="417" y="638">Omaha</text>
          <text class="big3" x="327" y="704">Lincoln</text>
          <g transform="translate(1105 813)" fill="#fff" stroke="#555"><path d="M1 3h5l1 2h5l1-2h6v14h-3v1h-3v-1h-4v1H6v-1H1z"/><path d="M4 8h12M4 11h12M4 14h12" fill="none"/></g>
        </svg>
      </div>
      <div class="status">
        <div class="sc"><span>1:2,737,387</span>${ic.caret}</div>
        <span class="sep s1"></span>
        <div class="hl"><svg viewBox="0 0 14 14" width="14" height="14"><path d="M0 1h10v10H0zM5 1v10M0 6h10" fill="none" stroke="#447"/><path d="M10 8v6M7 11h6" stroke="#135"/></svg></div>
        <svg viewBox="0 0 13 13" width="13" height="13"><path d="M.5.500h12v12H.500zM.5 4.500h12M.5 8.500h12M4.500.500v12M8.500.500v12" fill="none" stroke="#888"/></svg>
        <svg class="ml6" viewBox="0 0 18 16" width="18" height="16"><path d="M2 2h4v4H2zM7 4h6M2 14l8-8" fill="none" stroke="#555"/><rect x="9" y="11" width="6" height="4" fill="#fff" stroke="#3e8e4d"/><path d="M1 15h7" stroke="#3e8e4d"/></svg>
        <svg class="ml3" viewBox="0 0 16 16" width="16" height="16"><path d="M8 0v16M0 8h16" stroke="#bbb"/><rect x="4" y="6" width="8" height="4" fill="#b8d4b4"/></svg>
        <svg class="ml4" viewBox="0 0 15 17" width="15" height="17"><path d="M1 9V3l4 6V3" fill="none" stroke="#2b6fb0" stroke-width="1.300"/><path d="M10 3l4 7-7 6" fill="none" stroke="#555"/></svg>
        <span class="ml7">${ic.chev}</span>
        <span class="sep s2"></span>
        <span class="coord">90.8456529°W 40.0667140°N</span>
        ${ic.chev}
        <span class="sep s3"></span>
        <svg class="ml5" viewBox="0 0 18 18" width="18" height="18"><circle cx="6" cy="11" r="4.500" fill="none" stroke="#aaa"/><path d="M10 15l3 3" stroke="#aaa"/><rect x="8" y="1" width="8" height="8" fill="#fff" stroke="#999"/></svg>
        <span class="dis sf">Selected Features: 0</span>
        <span class="sep s4"></span>
        <svg class="ml8" viewBox="0 0 13 13" width="13" height="13"><path d="M.5.500h12v12H.500zM3 2l4 4v6M7 6l4-4" fill="none" stroke="#aaa"/></svg>
        <span class="sep s5"></span>
        <svg class="ml9" viewBox="0 0 12 14" width="12" height="14"><path d="M0 0h4v14H0zM8 0h4v14H8z" fill="#555"/></svg>
        <span class="sep s5"></span>
        <svg class="ml6" viewBox="0 0 18 18" width="18" height="18"><path d="M2 8a7 7 0 0 1 12-4l2-2v6h-6l2-2a4.500 4.500 0 0 0-7 2zM16 10a7 7 0 0 1-12 4l-2 2v-6h6l-2 2a4.500 4.500 0 0 0 7-2z" fill="#2e8fd1"/></svg>
      </div>
    </div>`;
  }

  renderSymbology() {
    const rows: [string, string, string][] = [["#f6f600", "75.1", "66.300000 - 7..."], ["#f5b800", "78.4", "75.100001 - 7..."], ["#f57b00", "81.2", "78.400001 - 8..."], ["#f74000", "84.3", "81.200001 - 8..."], ["#f50000", "90.2", "84.300001 - 9..."]];
    return html`<div class="panel right">
      <div class="ph"><span class="pt wider">Symbology - tl_2019_19_tract</span><span class="pb">${ic.chev}${ic.pin}${ic.x}</span></div>
      <div class="rt">
        ${ic.ssel}
        <svg viewBox="0 0 24 24" width="24" height="24"><rect x="1" y="1" width="15" height="15" fill="#7cbd7c" stroke="#3e8e4d"/><path d="M10 14l8-7 5 6-8 9z" fill="#cfe9cd" stroke="#7cbd7c"/></svg>
        <svg viewBox="0 0 23 23" width="23" height="23"><path d="M7 0v10M12 0v10M17 0v5M0 5h23M0 9h23M8 13v9M12 13v9M0 13h8M0 17h8M12 17c6 0 9-3 9-8" fill="none" stroke="#666"/><path d="M0 6h23v2H0z" fill="#a8c9e0"/></svg>
        <svg viewBox="0 0 21 23" width="21" height="23"><path d="M.5 1h20L13 10v12H8V10z" fill="#a9a9a9" stroke="#777"/></svg>
        <svg viewBox="0 0 24 24" width="24" height="24"><path d="M1 14 13 1l1 1L3 16z" fill="#555"/><path d="M0 17l2-3 2 1-1 2z" fill="#a87a3c"/><path d="M9 9h14v13H10V13z" fill="#fff" stroke="#666"/><path d="M13 14h2M17 14h4M13 17h2M17 17h4" stroke="#5a4aa0"/></svg>
        <div class="ham"><i></i><i></i><i></i></div>
      </div>
      <div class="bar rbar"><i></i></div>
      <div class="ps">Primary symbology</div>
      <div class="sel wide"><span>Graduated Colors</span>${ic.caret}</div>
      <div class="frow"><span class="fl">Field</span>${this.sel("e(0)", "")}<span class="aft">${ic.excel}</span></div>
      <div class="frow"><span class="fl">Normalization</span>${this.sel("<None>", "")}</div>
      <div class="frow m6"><span class="fl">Method</span>${this.sel("Natural Breaks (Jenks)", "")}</div>
      <div class="frow m5"><span class="fl">Classes</span>${this.sel("5", "")}</div>
      <div class="frow m5"><span class="fl">Color scheme</span><div class="sel tall"><span class="grad"></span>${ic.caret}</div><span class="aft">${ic.gear}</span></div>
      <div class="split"><i></i><i></i><i></i></div>
      <div class="ct"><div class="on">Classes</div><div>Histogram</div><div>Scales</div></div>
      <div class="cbody">
        <div class="ctools">
          <svg viewBox="0 0 15 13" width="15" height="13"><path d="M.5.500h14v12H.500zM.5 4.500h14M.5 8.500h14" fill="none" stroke="#bbb"/></svg>
          <svg viewBox="0 0 7 8" width="7" height="8"><path d="M0 7h7M1 2l2.500 2.500L6 2" fill="none" stroke="#aaa"/></svg>
          <span class="m">More</span>&nbsp;${ic.chev}
        </div>
        <div class="tbl">
          <div class="hrow"><div class="th">Symbol</div><div class="th"><span>Upper value</span><svg viewBox="0 0 7 4" width="7" height="4"><path d="M0 4h7L3.500 0z" fill="#777"/></svg></div><div class="th last">Label</div></div>
          ${rows.map(([c, u, l], i) => html`
            <div class="td sym ${i % 2 ? "alt" : ""}"><span class="sw" style="background:${c}"></span>${ic.caret}</div>
            <div class="td up ${i % 2 ? "alt" : ""}"><span>≤</span><span>${u}</span></div>
            <div class="td last ${i % 2 ? "alt" : ""}">${l}</div>`)}
        </div>
      </div>
      <div class="btabs"><span>Catalog</span><span class="on">Symbology</span></div>
    </div>`;
  }

  render() {
    const red = "#e3242b";
    return html`
      ${this.renderTitle()}${this.renderTabs()}${this.renderRibbon()}
      <div class="main">
        ${this.renderContents()}${this.renderMap()}${this.renderSymbology()}
        <div class="vt"><div class="a">Create Features</div><div class="b">Manage Templates</div><div class="c">Modify Features</div><div class="d">Element</div></div>
      </div>
      <svg class="ann" width="1467" height="867" viewBox="0 0 1467 867" fill="none" stroke=${red} stroke-width="1">
        <ellipse cx="675.500" cy="42" rx="55.500" ry="12"/>
        <ellipse cx="637.500" cy="89" rx="32" ry="30"/>
        <ellipse cx="93" cy="579" rx="80" ry="18"/>
        <path d="M163 560 604 53"/>
        <path d="M605 52l-7 2.500 3.500 3z" fill=${red}/>
        <path d="M693 67 677 81"/>
        <path d="M675 82l6-1.500-2.500-3z" fill=${red}/>
        <path d="M667 116 1145 243"/>
        <path d="M1147 243.500l-7-3.500-1 3.800z" fill=${red}/>
      </svg>`;
  }
}
